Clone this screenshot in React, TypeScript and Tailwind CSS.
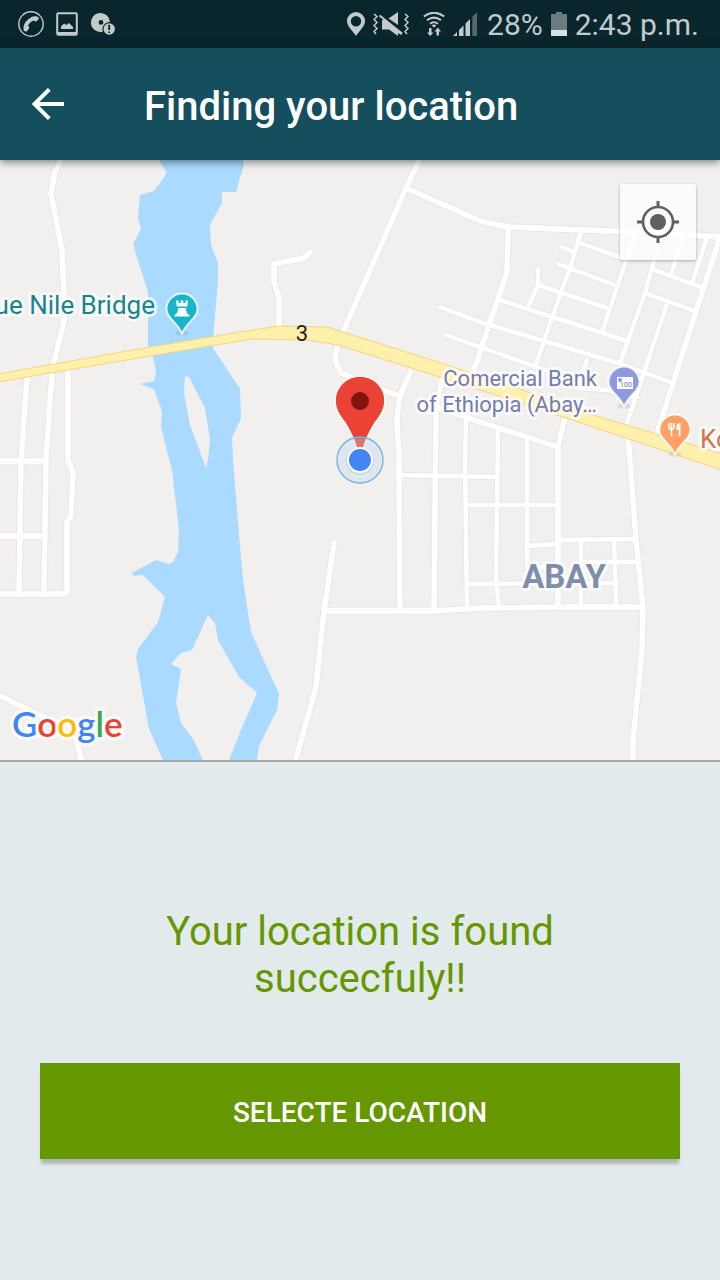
import React from "react";

const minorRoads: string[] = [
  "M62 -2 L55 12 L51 34 L62 90 L65 157 L53 206",
  "M52 214 L46 298 L44 434",
  "M27 218 L21 300 L19 434",
  "M68 212 L68 300 L73 312 L71 356 L67 361 L67 431 L63 434 L-2 434",
  "M-2 301 L45 301",
  "M-2 376 L45 376",
  "M-2 535 L46 558 L73 568 L82 602",
  "M310 92 L304 98 L274 104 L274 122 L279 138 L279 165",
  "M420 -2 L406 28 L343 172",
  "M338 185 L335 200 L340 212 L360 222 L400 236",
  "M406 28 L480 61 L508 67 L660 73 L722 77",
  "M508 67 L507 112 L473 213",
  "M412 208 L400 236 L397 258 L399 300 L400 450",
  "M442 220 L436 247 L434 450",
  "M436 247 L480 262 L527 277 L558 287",
  "M565 258 L558 287 L558 447",
  "M334 383 L324 451 L316 527 L295 602",
  "M324 451 L434 451 L480 448 L560 447 L643 447",
  "M628 278 L630 300 L636 380 L643 447 L642 490 L633 580 L633 602",
  "M719 80 L673 223 L657 273",
];

const lanes: string[] = [
  "M466 258 L465 300 L467 446",
  "M498 268 L496 420 L499 446",
  "M527 277 L527 407 L558 407",
  "M399 315 L496 317",
  "M465 345 L558 345",
  "M467 424 L617 423",
  "M527 386 L558 384 L560 380 L635 379",
  "M581 402 L637 402",
  "M581 380 L581 446",
  "M614 379 L616 446",
  "M581 72 L570 108 L560 135 L535 207",
  "M562 87 L573 92",
  "M580 83 L625 99",
  "M558 104 L615 125",
  "M538 109 L538 125 L528 147",
  "M538 125 L607 148",
  "M500 140 L627 181",
  "M440 147 L480 162 L618 203 L673 223",
  "M446 175 L480 187 L545 210",
  "M635 74 L602 172",
  "M661 75 L645 133 L620 203",
  "M683 76 L671 115",
  "M707 77 L692 123",
  "M652 109 L703 128",
  "M645 133 L697 152",
  "M667 144 L627 263",
  "M587 200 L577 228 L608 230 L637 237",
];

function CallIcon() {
  return (
    <svg viewBox="0 0 26 26" className="h-[26px] w-[26px]" fill="none" aria-hidden="true">
      <circle cx="13" cy="13" r="12.2" stroke="currentColor" strokeWidth="1.4" />
      <path
        d="M5.6 18.8 C5 14.8 6.5 11.5 10 8.5 C13 6 16 4.600 19.4 5.700 C20.700 6.200 21.300 7.400 20.300 8.500 L18.500 10.200 C17.600 10.900 16.700 10.500 16.100 9.400 C13.200 10.100 11 12.200 9.900 15 C11.200 15.400 11.700 16.300 11 17.400 L9.100 19.900 C8.200 20.900 6 20.800 5.600 18.800 Z"
        fill="currentColor"
      />
    </svg>
  );
}

function PictureIcon() {
  return (
    <svg viewBox="0 0 22 24" className="h-6 w-[22px]" fill="none" aria-hidden="true">
      <rect x="1.200" y="1.200" width="19.600" height="21.600" rx="1.200" stroke="currentColor" strokeWidth="2" />
      <path d="M1 20 H21 V23 H1 Z M5 17 V14.500 L8 11.500 L10.300 13 L13 11 L17 15 V17 Z" fill="currentColor" />
    </svg>
  );
}

function DiscAlertIcon() {
  return (
    <svg viewBox="0 0 25 24" className="h-6 w-[25px]" aria-hidden="true">
      <path
        fillRule="evenodd"
        d="M10.500 1 a9.500 9.500 0 1 0 2.300 18.700 A7.300 7.300 0 0 1 20 10 A9.500 9.500 0 0 0 10.500 1 Z M11 8 a2.400 2.400 0 1 1 0 4.800 a2.400 2.400 0 0 1 0 -4.800 Z"
        fill="currentColor"
      />
      <circle cx="19.200" cy="17" r="5.700" fill="currentColor" />
      <path d="M19.200 12.800 V18 M19.200 19.400 V21" stroke="#0a262d" strokeWidth="1.800" />
    </svg>
  );
}

function PlaceIcon() {
  return (
    <svg viewBox="0 0 18 24" className="h-6 w-[18px]" aria-hidden="true">
      <path
        fillRule="evenodd"
        d="M9 0 A9 9 0 0 0 0 9 C0 14.500 5 18 9 24 C13 18 18 14.500 18 9 A9 9 0 0 0 9 0 Z M9 4 A5.200 5.200 0 1 1 9 14.400 A5.200 5.200 0 0 1 9 4 Z"
        fill="currentColor"
      />
    </svg>
  );
}

function MutedIcon() {
  return (
    <svg viewBox="0 0 36 24" className="h-6 w-9" fill="none" aria-hidden="true">
      <path d="M9 8 H11.500 L29 21.500 L28 23 L25 21 V24 L16 17.500 H9 Z M15.500 6.500 L25 0 V13 Z" fill="currentColor" />
      <path d="M6.500 3.500 L29 21.500" stroke="currentColor" strokeWidth="2" />
      <path
        d="M1 2 L4 4.500 L1 7.500 L4 10.500 L1 13.500 L4 16.500 L1 19.500 L3 22 M32 2 L35 4.500 L32 7.500 L35 10.500 L32 13.500 L35 16.500 L32 19.500 L34 22"
        stroke="currentColor"
        strokeWidth="1.500"
      />
    </svg>
  );
}

function WifiIcon() {
  return (
    <svg viewBox="0 0 22 24" className="h-6 w-[22px]" fill="none" aria-hidden="true">
      <path
        d="M0.800 4.500 Q11 -3 21.200 4.500 M4 8.300 Q11 3 18 8.300 M7 11.800 Q11 8.800 15 11.800"
        stroke="currentColor"
        strokeWidth="2"
      />
      <path
        d="M8.700 13.200 Q11 11.800 13.300 13.200 L11 15.800 Z M6 16 H8.500 V20.500 H10.500 L7.200 24 L4 20.500 H6 Z M13.500 23.500 H16 V19.500 H18 L14.800 15.500 L11.600 19.500 H13.500 Z"
        fill="currentColor"
      />
    </svg>
  );
}

function SignalIcon() {
  return (
    <svg viewBox="0 0 24 24" className="h-6 w-6" fill="currentColor" aria-hidden="true">
      <path d="M0 24 L4 20 V24 Z M6 24 V18 L10.500 13.500 V24 Z M12.500 24 V11.500 L17 7 V24 Z" />
      <path d="M19.300 24 V4.700 L24 0 V24 Z" opacity="0.4" />
    </svg>
  );
}

function BatteryIcon() {
  return (
    <svg viewBox="0 0 16 24" className="h-6 w-4" aria-hidden="true">
      <path d="M0 2 H5 V0 H11 V2 H16 V18 H0 Z" fill="#6b7c80" />
      <path d="M0 18 H16 V24 H0 Z" fill="#dbe0e1" />
    </svg>
  );
}

function BackIcon() {
  return (
    <svg viewBox="0 0 32 32" className="h-8 w-8" fill="none" aria-hidden="true">
      <path d="M32 16 H3 M17.300 1.300 L2.600 16 L17.300 30.700" stroke="#ffffff" strokeWidth="3.900" />
    </svg>
  );
}

function LocateIcon() {
  return (
    <svg viewBox="0 0 42 42" className="h-[42px] w-[42px]" fill="none" aria-hidden="true">
      <circle cx="21" cy="21" r="15" stroke="#606060" strokeWidth="2.600" />
      <circle cx="21" cy="21" r="8" fill="#606060" />
      <path d="M21 0 V6 M21 36 V42 M0 21 H6 M36 21 H42" stroke="#606060" strokeWidth="3" />
    </svg>
  );
}

function PlacePin({ x, y, color, children }: { x: number; y: number; color: string; children: React.ReactNode }) {
  return (
    <g transform={`translate(${x} ${y})`}>
      <ellipse cx="0" cy="24" rx="7" ry="3" fill="#000000" opacity="0.08" />
      <path
        d="M0 -15.500 A15.500 15.500 0 0 0 -15.500 0 C-15.500 10 -4 13 0 25 C4 13 15.500 10 15.500 0 A15.500 15.500 0 0 0 0 -15.500 Z"
        fill={color}
        stroke="#ffffff"
        strokeOpacity="0.85"
        strokeWidth="1.800"
      />
      {children}
    </g>
  );
}

function MapCanvas() {
  return (
    <svg
      viewBox="0 0 720 600"
      preserveAspectRatio="xMidYMid slice"
      className="block h-full w-full"
      role="img"
      aria-label="Map of Abay"
    >
      <rect width="720" height="600" fill="#f1f0ef" />
      <path
        fill="#aadaff"
        d="M159 0 L167 13 L154 31 L140 35 L138 58 L141 69 L133 84 L140 107 L148 132 L148 185 L153 197 L156 212 L154 221 L140 224 L154 229 L162 252 L161 267 L169 299 L172 310 L179 370 L178 392 L173 402 L169 404 L156 400 L132 413 L133 416 L143 415 L165 437 L158 462 L138 489 L136 497 L149 569 L163 600 L257 600 L259 586 L277 550 L279 534 L251 472 L243 420 L240 386 L233 300 L232 278 L241 258 L240 229 L213 188 L213 180 L218 120 L218 103 L211 85 L210 65 L222 43 L222 32 L236 32 L240 18 L244 5 L243 0 Z"
      />
      <path
        fill="#f1f0ef"
        d="M185 216 L189 217 L205 248 L210 280 L208 300 L206 308 L203 300 L190 265 L184 233 Z M208 455 L215 463 L218 480 L239 517 L257 533 L240 572 L229 600 L203 600 L193 579 L181 563 L176 543 L181 509 L171 504 L181 493 L192 490 Z"
      />
      <g fill="none" strokeLinecap="round" strokeLinejoin="round">
        <g stroke="#e9e8e7">
          {minorRoads.map((d) => <path key={d} d={d} strokeWidth="7.500" />)}
          {lanes.map((d) => <path key={d} d={d} strokeWidth="6.500" />)}
        </g>
        <g stroke="#ffffff">
          {minorRoads.map((d) => <path key={d} d={d} strokeWidth="5.500" />)}
          {lanes.map((d) => <path key={d} d={d} strokeWidth="4.500" />)}
        </g>
      </g>
      <path
        fill="#fff0ac"
        stroke="#f6d47e"
        d="M-2 214 L150 187 L240 172 L280 166 L327 167 L413 194 L520 229 L580 251 L690 284 L722 294 L722 310 L677 295 L563 257 L443 218 L338 185 L307 180 L253 179 L240 181 L150 196 L-2 222 Z"
      />

      <g
        fontFamily="Roboto, 'Liberation Sans', sans-serif"
        stroke="#ffffff"
        strokeOpacity="0.7"
        strokeWidth="6"
        strokeLinejoin="round"
        paintOrder="stroke"
      >
        <text x="155" y="154" textAnchor="end" fontSize="26" fill="#17858f">Blue Nile Bridge</text>
        <text x="302" y="181" textAnchor="middle" fontSize="22" fill="#222222" stroke="none">3</text>
        <text textAnchor="end" fontSize="22" fill="#737daf">
          <tspan x="597" y="226">Comercial Bank</tspan>
          <tspan x="597" y="252">of Ethiopia (Abay…</tspan>
        </text>
        <text x="700" y="288" fontSize="26" fill="#d3754b">Kobeb</text>
        <text x="564" y="428" textAnchor="middle" fontSize="33" fontWeight="700" fill="#7d8fab">ABAY</text>
      </g>

      <PlacePin x={182} y={149} color="#18b4c9">
        <path
          fill="#ffffff"
          d="M-6 -8.500 H-3.500 V-6 H-1.300 V-8.500 H1.300 V-6 H3.500 V-8.500 H6 L5.300 -2.500 H-5.300 Z M-4 -1 H4 C4 3 5 5 7.500 6 V7.500 H-7.500 V6 C-5 5 -4 3 -4 -1 Z"
        />
      </PlacePin>
      <PlacePin x={624} y={222} color="#8d9ae0">
        <rect x="-7" y="-5" width="16" height="12" fill="#ffffff" />
        <circle cx="-4" cy="-2" r="2" fill="#8d9ae0" />
        <text x="2" y="5" textAnchor="middle" fontFamily="Roboto, sans-serif" fontSize="7" fill="#6474cc">100</text>
      </PlacePin>
      <PlacePin x={675} y={270} color="#ffa066">
        <path
          fill="none"
          stroke="#ffffff"
          strokeWidth="1.600"
          d="M-6 -7 V-2 Q-3.500 1 -1 -2 V-7 M-3.500 -7 V6.500"
        />
        <path fill="#ffffff" d="M5.500 -7 V6.500 H3.700 V0 H1.500 V-4 Q2 -7 5.500 -7 Z" />
      </PlacePin>

      <path
        d="M360 216 A25 25 0 0 0 335 241 C335 250 340 256 345 263 C350 271 354 278 357 290 H363 C366 278 370 271 375 263 C380 256 385 250 385 241 A25 25 0 0 0 360 216 Z"
        fill="#ea4335"
        stroke="#ffffff"
        strokeWidth="1.500"
      />
      <circle cx="360" cy="241" r="9" fill="#7f1410" />
      <circle cx="360" cy="300" r="23" fill="#b4d6f0" fillOpacity="0.35" stroke="#7db0df" strokeWidth="1.400" />
      <circle cx="360" cy="301" r="14" fill="#000000" opacity="0.07" />
      <circle cx="360" cy="300" r="12" fill="#4285f4" stroke="#ffffff" strokeWidth="2" />

      <text
        x="12"
        y="577"
        fontFamily="Lato, sans-serif"
        fontSize="35"
        fontWeight="600"
        stroke="#ffffff"
        strokeOpacity="0.7"
        strokeWidth="7"
        strokeLinejoin="round"
        paintOrder="stroke"
      >
        <tspan fill="#4285f4">G</tspan>
        <tspan fill="#ea4335">o</tspan>
        <tspan fill="#fbbc05">o</tspan>
        <tspan fill="#4285f4">g</tspan>
        <tspan fill="#34a853">l</tspan>
        <tspan fill="#ea4335">e</tspan>
      </text>
    </svg>
  );
}

export default function App() {
  return (
    <div className="flex min-h-screen flex-col bg-[#e2eaec] font-['Roboto','Liberation_Sans',sans-serif]">
      <div className="flex h-12 items-center justify-between bg-[#0a262d] pr-[21px] pl-[18px] text-[#c2cacb]">
        <div className="flex items-center gap-3">
          <CallIcon />
          <PictureIcon />
          <DiscAlertIcon />
        </div>
        <div className="flex items-center gap-2 text-[30px] leading-none">
          <PlaceIcon />
          <MutedIcon />
          <span className="flex items-center gap-2 pr-0.5 pl-1.5">
            <WifiIcon />
            <SignalIcon />
          </span>
          <span className="pt-0.5">28%</span>
          <BatteryIcon />
          <span className="pt-0.5">2:43 p.m.</span>
        </div>
      </div>

      <header className="relative z-10 flex h-28 items-center bg-[#154f5d] px-8 shadow-[0_2px_8px_rgba(0,0,0,0.5)]">
        <button type="button" aria-label="Back" className="flex w-28 items-center">
          <BackIcon />
        </button>
        <h1 className="pt-1.5 text-[40px] leading-none font-medium text-white">Finding your location</h1>
      </header>

      <section className="relative h-[602px] border-b-2 border-[#a9abab]">
        <MapCanvas />
        <button
          type="button"
          aria-label="My location"
          className="absolute top-6 right-6 flex h-[76px] w-[76px] items-center justify-center rounded-[3px] bg-white/75 shadow-[0_1px_3px_rgba(0,0,0,0.3)]"
        >
          <LocateIcon />
        </button>
      </section>

      <main className="flex flex-1 flex-col px-10 pt-[146px] pb-10">
        <p className="px-20 text-center text-[40px] leading-[47px] text-[#659700]">
          Your location is found succecfuly!!
        </p>
        <button
          type="button"
          className="mt-[61px] h-24 w-full bg-[#659700] pt-1 text-[28px] leading-none font-medium text-white uppercase shadow-[0_6px_3px_-1px_rgba(0,0,0,0.22)]"
        >
          Selecte location
        </button>
      </main>
    </div>
  );
}
